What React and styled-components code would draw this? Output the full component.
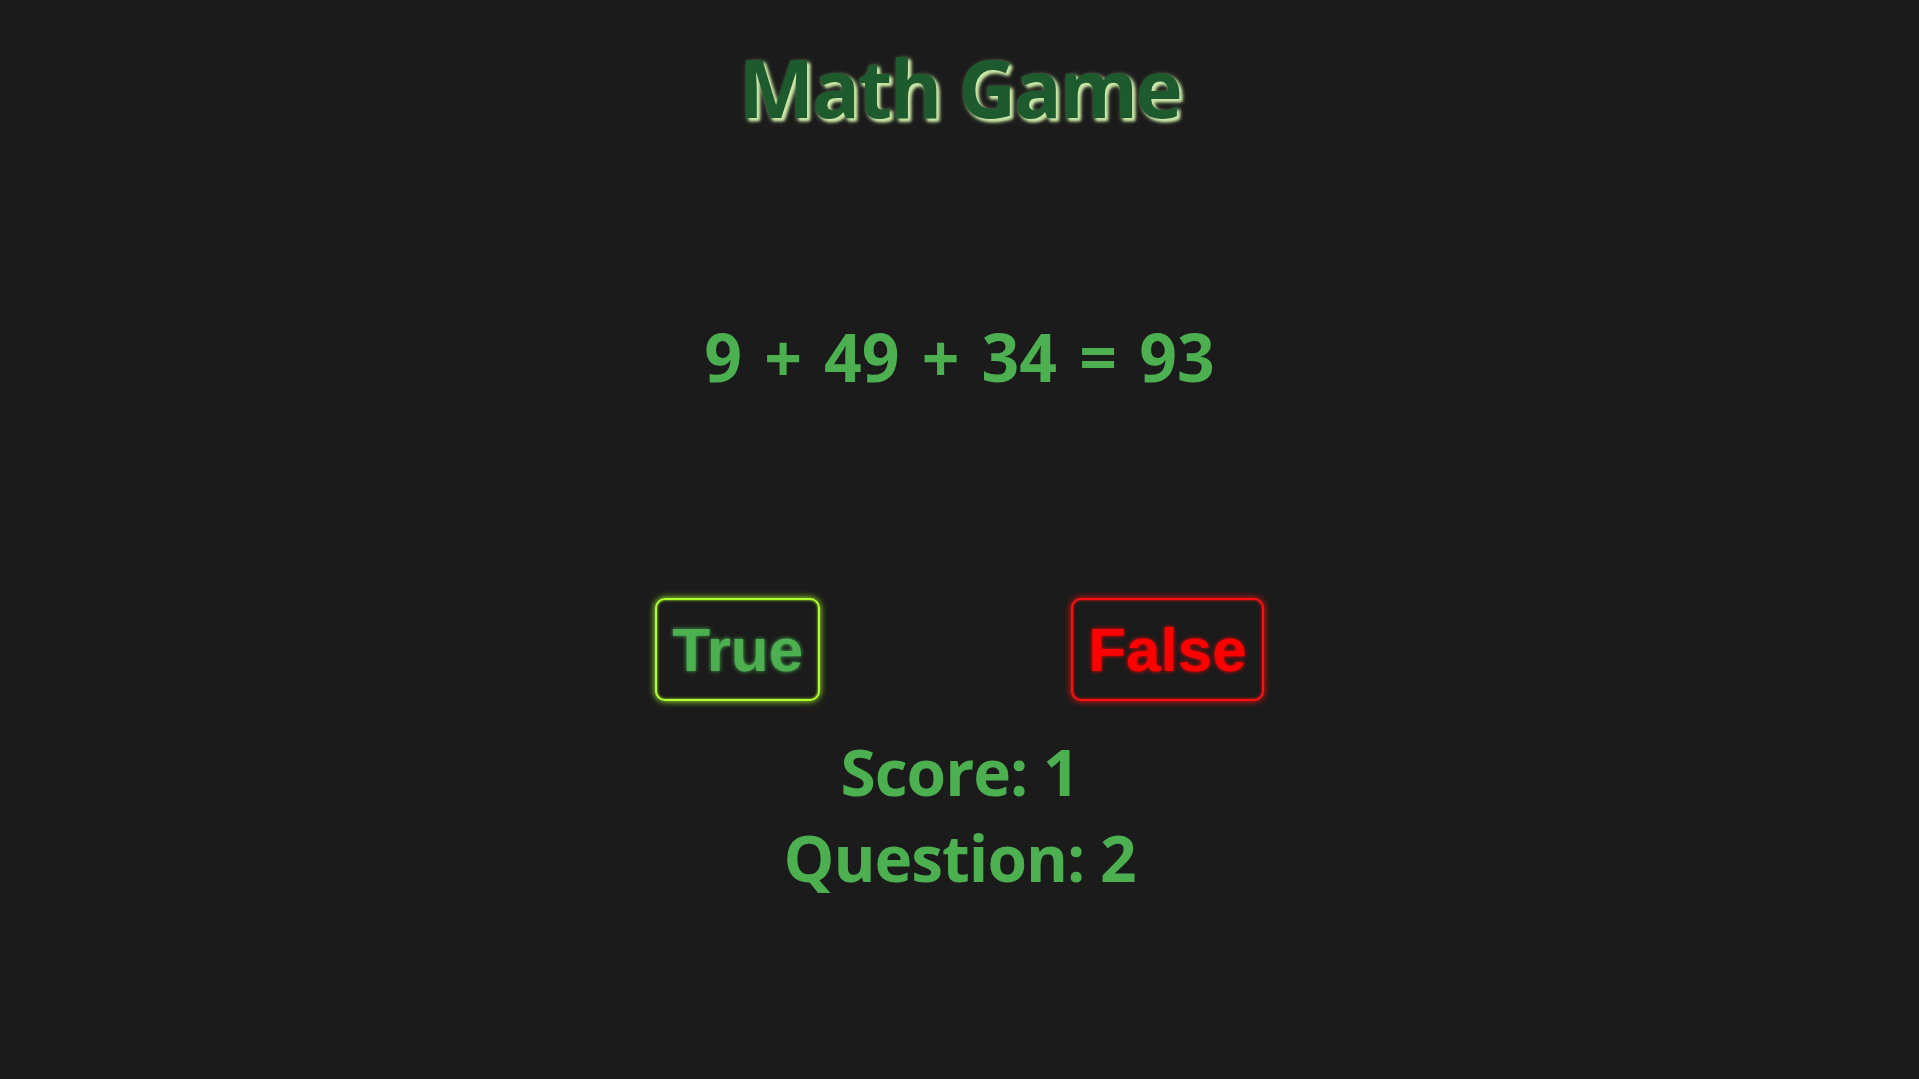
import React, { useState } from "react";
import styled, { createGlobalStyle } from "styled-components";

const GlobalStyle = createGlobalStyle`
  html, body {
    margin: 0;
    padding: 0;
    background-color: #1b1b1b;
  }
  #root {
    min-height: 100vh;
  }
`;

const makeQuestion = () => ({ terms: [9, 49, 34], answer: 93 });

const App = () => {
  const [question] = useState(makeQuestion);
  const [score, setScore] = useState(1);
  const [count, setCount] = useState(2);

  const handleAnswer = (guess) => {
    const sum = question.terms.reduce((a, b) => a + b, 0);
    if ((sum === question.answer) === guess) setScore(score + 1);
    setCount(count + 1);
  };

  return (
    <Container>
      <GlobalStyle />
      <Title>Math Game</Title>
      <Equation>
        {question.terms.join(" + ")} = {question.answer}
      </Equation>
      <Choices>
        <Choice color="#4caf50" edge="#adff2f" onClick={() => handleAnswer(true)}>
          True
        </Choice>
        <Choice color="#ff0000" edge="#ff1010" onClick={() => handleAnswer(false)}>
          False
        </Choice>
      </Choices>
      <Stats>
        <Stat>Score: {score}</Stat>
        <Stat>Question: {count}</Stat>
      </Stats>
    </Container>
  );
};

const Container = styled.div`
  display: flex;
  flex-direction: column;
  align-items: center;
  font-family: "Open Sans", "Noto Sans", sans-serif;
  font-weight: 700;
  color: #4caf50;
`;

const Title = styled.h1`
  margin: 39px 0 0;
  font-size: 80px;
  line-height: 1.2;
  font-weight: 700;
  letter-spacing: -2.5px;
  color: #1d5a2d;
  text-shadow: 3px 3px 3px #cde8a8, 2px 2px 5px #b9d994;
`;

const Equation = styled.h2`
  margin: 182px 0 0;
  font-size: 66px;
  line-height: 1.2;
  font-weight: 700;
  word-spacing: 5px;
`;

const Choices = styled.div`
  display: flex;
  gap: 251px;
  margin-top: 202px;
`;

const Choice = styled.button`
  font-family: "Liberation Sans", Arial, sans-serif;
  font-weight: 700;
  font-size: 62px;
  line-height: 1.15;
  padding: 14px 15px;
  border: 2px solid ${(p) => p.edge};
  border-radius: 10px;
  background-color: #1b1b1b;
  color: ${(p) => p.color};
  text-shadow: 0 0 4px ${(p) => p.color};
  box-shadow: 0 0 7px ${(p) => p.edge}, inset 0 0 3px ${(p) => p.edge};
  cursor: pointer;
`;

const Stats = styled.div`
  display: flex;
  flex-direction: column;
  align-items: center;
  margin-top: 28px;
`;

const Stat = styled.div`
  font-size: 64px;
  line-height: 1.33;
  letter-spacing: -1px;
`;

export default App;
